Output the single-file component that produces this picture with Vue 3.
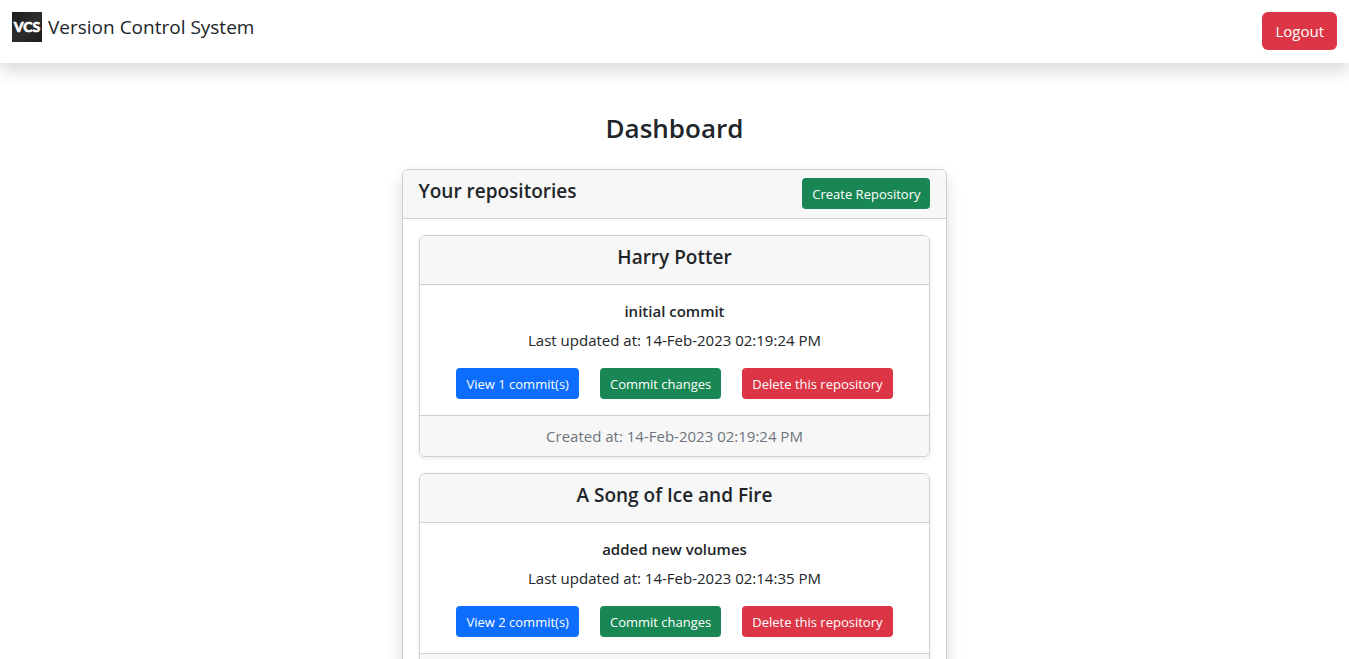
<script setup>
const repositories = [
  {
    name: 'Harry Potter',
    message: 'initial commit',
    commits: 1,
    updated: '14-Feb-2023 02:19:24 PM',
    created: '14-Feb-2023 02:19:24 PM',
  },
  {
    name: 'A Song of Ice and Fire',
    message: 'added new volumes',
    commits: 2,
    updated: '14-Feb-2023 02:14:35 PM',
    created: '',
  },
]
</script>

<template>
  <div class="page">
    <header class="navbar">
      <a class="brand" href="#">
        <svg class="logo" viewBox="0 0 30 30" aria-hidden="true">
          <defs>
            <linearGradient id="logo-shade" x1="0" y1="0" x2="1" y2="1">
              <stop offset="0" stop-color="#1c1c1c" />
              <stop offset="0.5" stop-color="#2d2d2d" />
              <stop offset="1" stop-color="#1c1c1c" />
            </linearGradient>
          </defs>
          <rect width="30" height="30" fill="url(#logo-shade)" />
          <text class="logo-text" x="15" y="20" text-anchor="middle">VCS</text>
        </svg>
        <span>Version Control System</span>
      </a>
      <button class="btn danger" type="button">Logout</button>
    </header>

    <main class="content">
      <h1 class="title">Dashboard</h1>
      <section class="card panel">
        <div class="card-header panel-header">
          <h2 class="heading">Your repositories</h2>
          <button class="btn small success" type="button">Create Repository</button>
        </div>
        <div class="panel-body">
          <article v-for="repo in repositories" :key="repo.name" class="card repo">
            <div class="card-header">
              <h3 class="heading">{{ repo.name }}</h3>
            </div>
            <div class="repo-body">
              <h4 class="message">{{ repo.message }}</h4>
              <p class="updated">Last updated at: {{ repo.updated }}</p>
              <div class="actions">
                <button class="btn small primary" type="button">View {{ repo.commits }} commit(s)</button>
                <button class="btn small success" type="button">Commit changes</button>
                <button class="btn small danger" type="button">Delete this repository</button>
              </div>
            </div>
            <div class="card-footer">
              <template v-if="repo.created">Created at: {{ repo.created }}</template>
            </div>
          </article>
        </div>
      </section>
    </main>
  </div>
</template>

<style>
body {
  margin: 0;
  background: #fff;
}
</style>

<style scoped>
.page {
  font-family: 'Segoe UI', 'Open Sans', 'Noto Sans', sans-serif;
  font-size: 15px;
  line-height: 24px;
  color: #212529;
}

.navbar {
  display: flex;
  align-items: flex-start;
  justify-content: space-between;
  padding: 12px 12px 13px;
  background: #fff;
  box-shadow: 0 8px 16px rgba(0, 0, 0, 0.15);
}

.brand {
  display: flex;
  align-items: center;
  gap: 6px;
  font-size: 19px;
  line-height: 30px;
  font-weight: 500;
  color: #212529;
  text-decoration: none;
}

.logo {
  display: block;
  width: 30px;
  height: 30px;
}

.logo-text {
  font-family: Lato, 'Open Sans', sans-serif;
  font-size: 14px;
  font-weight: 900;
  fill: #fff;
  stroke: #fff;
  stroke-width: 0.6px;
}

.btn {
  padding: 6px 12px;
  border: 1px solid transparent;
  border-radius: 6px;
  font-family: inherit;
  font-size: 15px;
  line-height: 24px;
  color: #fff;
  cursor: pointer;
}

.small {
  padding: 5px 9px 3px;
  border-radius: 4px;
  font-size: 13px;
  line-height: 21px;
}

.primary {
  background: #0d6efd;
}

.success {
  background: #198754;
}

.danger {
  background: #dc3545;
}

.content {
  display: flex;
  flex-direction: column;
  align-items: center;
  padding-top: 48px;
}

.title {
  margin: 0 0 24px;
  font-size: 26px;
  line-height: 34px;
  font-weight: 600;
}

.card {
  box-sizing: border-box;
  border: 1px solid #cfcfcf;
  border-radius: 6px;
  background: #fff;
}

.panel {
  width: calc(41.66% - 16px);
  box-shadow: 0 8px 16px rgba(0, 0, 0, 0.15);
}

.card-header {
  padding: 8px 16px;
  border-bottom: 1px solid #cfcfcf;
  border-radius: 5px 5px 0 0;
  background: #f7f7f7;
}

.panel-header {
  display: flex;
  align-items: flex-start;
  justify-content: space-between;
  padding-bottom: 9px;
}

.heading {
  margin: 0 0 6px;
  font-size: 19px;
  line-height: 26px;
  font-weight: 600;
}

.panel-header .heading {
  margin: 0;
}

.panel-body {
  display: flex;
  flex-direction: column;
  gap: 16px;
  padding: 16px;
}

.repo {
  text-align: center;
  box-shadow: 0 2px 4px rgba(0, 0, 0, 0.075);
}

.repo-body {
  padding: 16px;
}

.message {
  margin: 0 0 7px;
  font-size: 15px;
  line-height: 20px;
  font-weight: 600;
}

.updated {
  margin: 0 0 16px;
}

.actions {
  display: flex;
  flex-wrap: wrap;
  justify-content: center;
  gap: 8px 21px;
}

.card-footer {
  min-height: 24px;
  padding: 8px 16px;
  border-top: 1px solid #cfcfcf;
  border-radius: 0 0 5px 5px;
  background: #f7f7f7;
  color: #6c757d;
}
</style>
